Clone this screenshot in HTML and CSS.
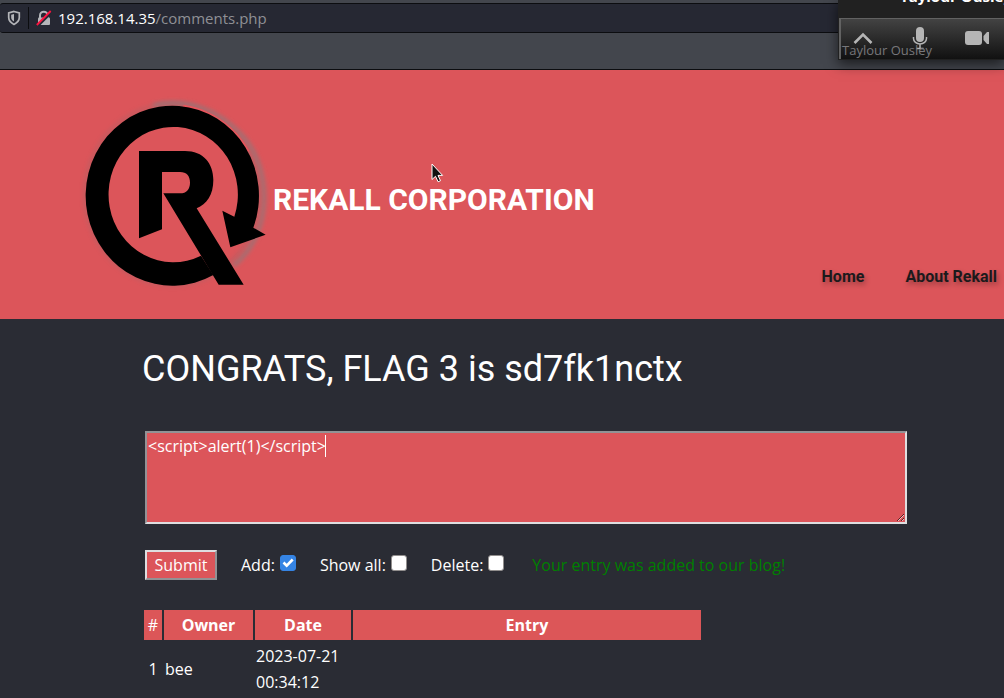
FILE: index.html
```html
<!DOCTYPE html>
<html lang="en">
<head>
<meta charset="utf-8">
<title>Rekall Corporation</title>
<link rel="stylesheet" href="styles.css">
</head>
<body>
<div class="chrome">
  <div class="urlbar">
    <svg class="shield" viewBox="0 0 14 16" aria-hidden="true"><path d="M7 1.500 12.300 3v4.600c0 3.200-2 5.200-5.300 6.800-3.300-1.600-5.300-3.600-5.300-6.800V3z" fill="none" stroke="#b4b5b9" stroke-width="1.700"/><path d="M7 4v7.600c-1.900-1.100-2.800-2.400-2.800-4.200V4.800z" fill="#b4b5b9"/></svg>
    <span class="divider"></span>
    <svg class="lock" viewBox="0 0 16 16" aria-hidden="true"><path d="M4 8V5.500a3.800 3.800 0 0 1 7.600 0V8" fill="none" stroke="#b4b5b9" stroke-width="2"/><rect x="2" y="7.500" width="12" height="7.500" rx="1" fill="#b4b5b9"/><path d="M1.500 16 15.500 2" stroke="#262833" stroke-width="3"/><path d="M.8 15 14.700 1" stroke="#ff1440" stroke-width="1.800"/></svg>
    <div class="address" role="textbox" aria-label="Address" contenteditable="true" spellcheck="false">192.168.14.35<span class="path">/comments.php</span></div>
  </div>
</div>

<header class="banner">
  <div class="brand">
    <svg class="logo" viewBox="0 0 660 630" role="img" aria-label="Rekall logo">
      <defs><filter id="soft" x="-20%" y="-20%" width="140%" height="140%"><feGaussianBlur stdDeviation="6"/></filter></defs>
      <ellipse cx="307" cy="314" rx="262" ry="272" fill="none" stroke="#99666b" stroke-width="8" opacity=".5" filter="url(#soft)"/>
      <path d="M250 46C350 22 450 62 520 140C606 240 610 430 490 528" fill="none" stroke="#947679" stroke-width="10" filter="url(#soft)"/>
      <path d="M340 48C430 60 500 120 535 185" fill="none" stroke="#e9555c" stroke-width="7"/>
      <path d="M493 380A194 203 0 1 0 393 497L430 555A260 270 0 1 1 550 413L587 434 481 472 457 362Z"/>
      <path d="M207 183H345C400 183 430 220 430 270C430 315 410 343 380 355L521 584H446L280 310H330C350 310 360 297 360 278C360 258 350 246 330 246H276V418L207 445Z"/>
    </svg>
    <h1 class="company">REKALL CORPORATION</h1>
  </div>
  <nav class="menu"><a href="#home">Home</a><a href="#about">About Rekall</a></nav>
</header>

<main class="content">
  <h2 class="flag">CONGRATS, FLAG 3 is sd7fk1nctx</h2>
  <form class="blog-form">
    <div class="entry-box">
      <textarea class="entry" aria-label="Blog entry">&lt;script&gt;alert(1)&lt;/script&gt;</textarea>
      <span class="caret"></span>
    </div>
    <div class="actions">
      <button class="submit" type="button">Submit</button>
      <div class="option"><label for="add">Add:</label><input class="tick" type="checkbox" id="add" checked></div>
      <div class="option"><label for="all">Show all:</label><input class="tick" type="checkbox" id="all"></div>
      <div class="option"><label for="del">Delete:</label><input class="tick" type="checkbox" id="del"></div>
      <span class="notice">Your entry was added to our blog!</span>
    </div>
  </form>
  <table class="posts">
    <thead><tr><th class="num">#</th><th class="owner">Owner</th><th class="date">Date</th><th class="text">Entry</th></tr></thead>
    <tbody><tr><td class="center">1</td><td>bee</td><td>2023-07-21 00:34:12</td><td></td></tr></tbody>
  </table>
</main>

<aside class="call">
  <div class="speaker">Taylour Ousley</div>
  <div class="controls">
    <button class="control" type="button" aria-label="Collapse"><svg viewBox="0 0 24 24"><path d="M3.500 17 12 8.500 20.500 17" fill="none" stroke="#b5b5b5" stroke-width="2.600"/></svg></button>
    <button class="control" type="button" aria-label="Microphone"><svg viewBox="0 0 24 24"><rect x="8" y="1" width="8" height="15" rx="4" fill="#b5b5b5"/><path d="M5.500 11v1.500a6.500 5.500 0 0 0 13 0V11M12 18v4M8.500 22.500h7" fill="none" stroke="#b5b5b5" stroke-width="1.500"/></svg></button>
    <button class="control" type="button" aria-label="Camera"><svg viewBox="0 0 24 24"><rect x="0" y="5" width="17" height="14" rx="3" fill="#b5b5b5"/><path d="M18.500 10 22 6h2v12h-2l-3.500-4z" fill="#b5b5b5"/></svg></button>
  </div>
  <div class="caption">Taylour Ousley</div>
</aside>
<svg class="pointer" viewBox="0 0 13 20" aria-hidden="true"><path d="M1 1v15.500l3.500-3.200 2.600 5.500 2.400-1.100-2.500-5.300h4.600z" fill="#111" stroke="#fff" stroke-width="1"/></svg>
</body>
</html>
```
FILE: styles.css
```css
* { box-sizing: border-box; }
body {
  margin: 0;
  min-height: 100vh;
  overflow: hidden;
  position: relative;
  background: #2a2c34;
  color: #fff;
  font: 16px/26px "Open Sans", "Noto Sans", sans-serif;
}
.chrome {
  height: 70px;
  padding-top: 3px;
  background: #43464d;
  border-bottom: 1px solid #0c0d10;
}
.urlbar {
  display: flex;
  align-items: center;
  height: 30px;
  padding-left: 7px;
  background: #262833;
  border: solid #0c0d10;
  border-width: 1px 0;
  border-radius: 3px 0 0 3px;
}
.shield { width: 14px; height: 16px; }
.divider { width: 1px; height: 22px; margin: 0 7px; background: #0c0d10; }
.lock { width: 16px; height: 16px; }
.address { margin-left: 6px; font-size: 15px; line-height: 20px; }
.path { color: #8f9095; }

.banner {
  display: flex;
  flex-direction: column;
  height: 249px;
  background: #dc555a;
}
.brand { display: flex; padding: 20px 0 0 70px; height: 195px; }
.logo { flex: none; width: 220px; height: 210px; margin-right: -17px; }
.company {
  margin: 90px 0 0;
  font: 700 30px/40px Roboto, sans-serif;
}
.menu {
  display: flex;
  justify-content: flex-end;
  gap: 41px;
  padding-right: 7px;
}
.menu a {
  color: #1c1a1c;
  font: 700 16px/24px Roboto, sans-serif;
  text-decoration: none;
  text-shadow: 2px 3px 5px rgba(0, 0, 0, .3);
}

.content { padding: 25px 97px 0 142px; }
.flag {
  margin: 0 0 37px;
  font: 400 36px/50px Roboto, sans-serif;
}
.blog-form { padding-left: 3px; }
.entry-box { position: relative; display: flex; }
.entry {
  width: 100%;
  height: 93px;
  padding: 0 1px;
  background: #dc555a;
  color: #fff;
  border: 2px solid;
  border-color: #929295 #dedee0 #dedee0 #929295;
  font: inherit;
  outline: none;
}
.caret {
  position: absolute;
  left: 180px;
  top: 4px;
  width: 1px;
  height: 22px;
  background: #fff;
}
.actions { display: flex; align-items: center; margin-top: 26px; height: 30px; }
.submit {
  width: 72px;
  height: 30px;
  padding: 0;
  background: #dc555a;
  color: #fff;
  border: 2px solid;
  border-color: #dedee0 #929295 #929295 #dedee0;
  font: inherit;
}
.option { display: flex; align-items: center; margin-left: 24px; }
.tick {
  appearance: none;
  width: 16px;
  height: 16px;
  margin: 0 0 4px 5px;
  background: #fff;
  border: 1px solid #918e8d;
  border-radius: 3px;
}
.tick:checked {
  border-color: #3584e4;
  background: #3584e4 url("data:image/svg+xml,%3Csvg xmlns='http://www.w3.org/2000/svg' viewBox='0 0 14 14'%3E%3Cpath d='M2.500 6.500 5.700 9.700 11.700 3.500' fill='none' stroke='white' stroke-width='2.600'/%3E%3C/svg%3E");
}
.notice { margin-left: 28px; color: #008000; }

.posts {
  width: 561px;
  margin-top: 28px;
  table-layout: fixed;
  border-spacing: 2px;
}
.posts th { height: 30px; padding: 0; background: #dc5658; }
.posts td { padding: 1px; }
.posts .center { text-align: center; }
.posts .num { width: 18px; font-weight: 400; }
.posts .owner { width: 89px; }
.posts .date { width: 96px; }

.call {
  position: absolute;
  top: 0;
  right: 0;
  width: 166px;
  height: 60px;
  background: #212121;
  box-shadow: 0 4px 12px rgba(0, 0, 0, .6);
}
.speaker {
  height: 32px;
  margin-top: -14px;
  padding-left: 62px;
  overflow: hidden;
  white-space: nowrap;
  font-size: 15px;
  font-weight: 700;
  line-height: 20px;
}
.controls {
  display: flex;
  justify-content: space-between;
  height: 41px;
  margin-left: 1px;
  padding: 7px 15px 0 10px;
  background: linear-gradient(#434343, #111);
  border: solid #626262;
  border-width: 1px 0 0 2px;
}
.control { width: 24px; height: 24px; padding: 0; background: none; border: 0; }
.control svg { display: block; width: 24px; height: 24px; }
.caption {
  position: absolute;
  left: 4px;
  top: 40px;
  color: #77777a;
  font-size: 13px;
  line-height: 20px;
  white-space: nowrap;
}
.pointer { position: absolute; left: 431px; top: 163px; width: 13px; height: 20px; }
```
